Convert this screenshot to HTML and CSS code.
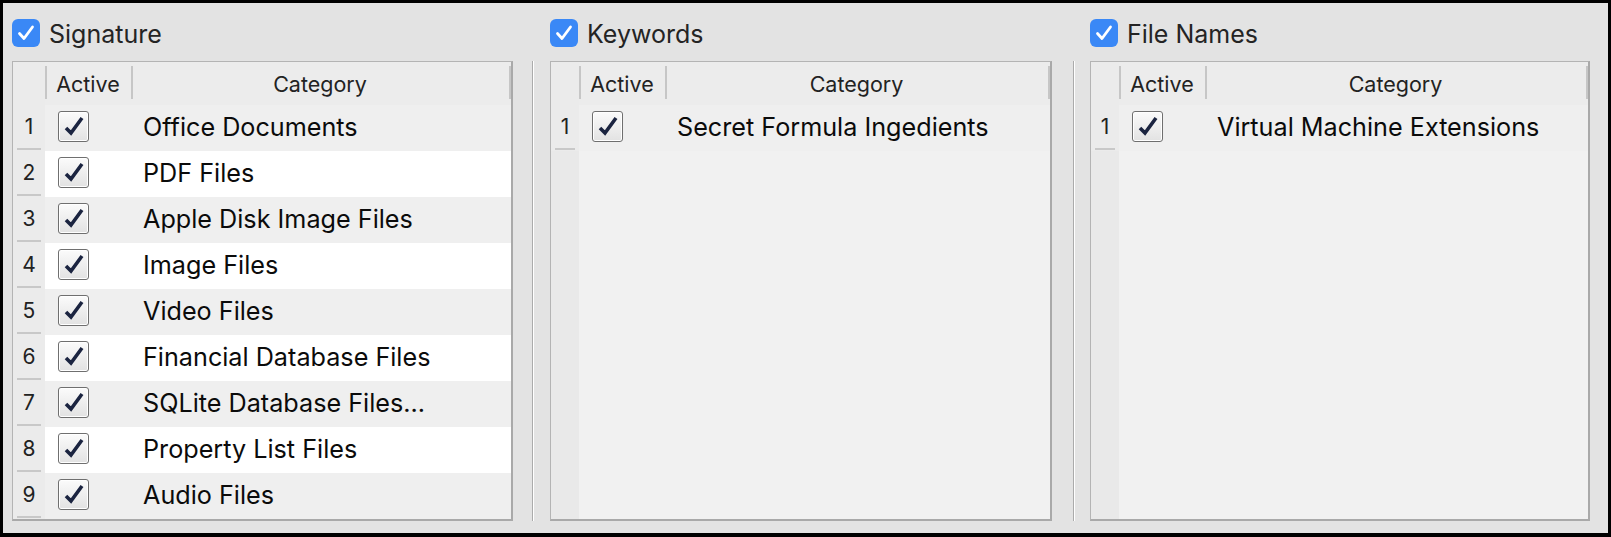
FILE: index.html
```html
<!DOCTYPE html>
<html lang="en">
<head>
<meta charset="utf-8">
<title>Categories</title>
<link rel="stylesheet" href="styles.css">
</head>
<body>
<div class="window">
  <section class="panel p1">
    <div class="title"><span class="bluebox"><svg viewBox="0 0 28 28" width="28" height="28"><path d="M7.5 14.5 L12 19.5 L20.5 8" fill="none" stroke="#fff" stroke-width="2.8" stroke-linecap="round" stroke-linejoin="round"/></svg></span><span class="title-text">Signature</span></div>
    <div class="table">
      <div class="thead">
        <div class="th num"></div>
        <div class="th active">Active</div>
        <div class="th cat">Category</div>
        <div class="th end"></div>
      </div>
      <div class="tbody">
        <div class="tr odd"><div class="num">1</div><div class="cell active"><span class="cb"><svg viewBox="0 0 31 31" width="31" height="31"><path d="M8 17 L13 22 L24 7" fill="none" stroke="#1b2440" stroke-width="3.6"/></svg></span></div><div class="cell cat">Office Documents</div></div>
        <div class="tr even"><div class="num">2</div><div class="cell active"><span class="cb"><svg viewBox="0 0 31 31" width="31" height="31"><path d="M8 17 L13 22 L24 7" fill="none" stroke="#1b2440" stroke-width="3.6"/></svg></span></div><div class="cell cat">PDF Files</div></div>
        <div class="tr odd"><div class="num">3</div><div class="cell active"><span class="cb"><svg viewBox="0 0 31 31" width="31" height="31"><path d="M8 17 L13 22 L24 7" fill="none" stroke="#1b2440" stroke-width="3.6"/></svg></span></div><div class="cell cat">Apple Disk Image Files</div></div>
        <div class="tr even"><div class="num">4</div><div class="cell active"><span class="cb"><svg viewBox="0 0 31 31" width="31" height="31"><path d="M8 17 L13 22 L24 7" fill="none" stroke="#1b2440" stroke-width="3.6"/></svg></span></div><div class="cell cat">Image Files</div></div>
        <div class="tr odd"><div class="num">5</div><div class="cell active"><span class="cb"><svg viewBox="0 0 31 31" width="31" height="31"><path d="M8 17 L13 22 L24 7" fill="none" stroke="#1b2440" stroke-width="3.6"/></svg></span></div><div class="cell cat">Video Files</div></div>
        <div class="tr even"><div class="num">6</div><div class="cell active"><span class="cb"><svg viewBox="0 0 31 31" width="31" height="31"><path d="M8 17 L13 22 L24 7" fill="none" stroke="#1b2440" stroke-width="3.6"/></svg></span></div><div class="cell cat">Financial Database Files</div></div>
        <div class="tr odd"><div class="num">7</div><div class="cell active"><span class="cb"><svg viewBox="0 0 31 31" width="31" height="31"><path d="M8 17 L13 22 L24 7" fill="none" stroke="#1b2440" stroke-width="3.6"/></svg></span></div><div class="cell cat">SQLite Database Files...</div></div>
        <div class="tr even"><div class="num">8</div><div class="cell active"><span class="cb"><svg viewBox="0 0 31 31" width="31" height="31"><path d="M8 17 L13 22 L24 7" fill="none" stroke="#1b2440" stroke-width="3.6"/></svg></span></div><div class="cell cat">Property List Files</div></div>
        <div class="tr odd"><div class="num">9</div><div class="cell active"><span class="cb"><svg viewBox="0 0 31 31" width="31" height="31"><path d="M8 17 L13 22 L24 7" fill="none" stroke="#1b2440" stroke-width="3.6"/></svg></span></div><div class="cell cat">Audio Files</div></div>
      </div>
    </div>
  </section>
  <div class="sep sep1"></div>
  <section class="panel p2">
    <div class="title"><span class="bluebox"><svg viewBox="0 0 28 28" width="28" height="28"><path d="M7.5 14.5 L12 19.5 L20.5 8" fill="none" stroke="#fff" stroke-width="2.8" stroke-linecap="round" stroke-linejoin="round"/></svg></span><span class="title-text">Keywords</span></div>
    <div class="table narrow">
      <div class="thead">
        <div class="th num"></div>
        <div class="th active">Active</div>
        <div class="th cat">Category</div>
        <div class="th end"></div>
      </div>
      <div class="tbody">
        <div class="tr odd"><div class="num">1</div><div class="cell active"><span class="cb"><svg viewBox="0 0 31 31" width="31" height="31"><path d="M8 17 L13 22 L24 7" fill="none" stroke="#1b2440" stroke-width="3.6"/></svg></span></div><div class="cell cat">Secret Formula Ingedients</div></div>
        <div class="filler"><div class="num"></div><div class="rest"></div></div>
      </div>
    </div>
  </section>
  <div class="sep sep2"></div>
  <section class="panel p3">
    <div class="title"><span class="bluebox"><svg viewBox="0 0 28 28" width="28" height="28"><path d="M7.5 14.5 L12 19.5 L20.5 8" fill="none" stroke="#fff" stroke-width="2.8" stroke-linecap="round" stroke-linejoin="round"/></svg></span><span class="title-text">File Names</span></div>
    <div class="table narrow">
      <div class="thead">
        <div class="th num"></div>
        <div class="th active">Active</div>
        <div class="th cat">Category</div>
        <div class="th end"></div>
      </div>
      <div class="tbody">
        <div class="tr odd"><div class="num">1</div><div class="cell active"><span class="cb"><svg viewBox="0 0 31 31" width="31" height="31"><path d="M8 17 L13 22 L24 7" fill="none" stroke="#1b2440" stroke-width="3.6"/></svg></span></div><div class="cell cat">Virtual Machine Extensions</div></div>
        <div class="filler"><div class="num"></div><div class="rest"></div></div>
      </div>
    </div>
  </section>
</div>
</body>
</html>
```

FILE: styles.css
```css
html, body {
  margin: 0;
  padding: 0;
  background: #e3e3e3;
}

body {
  font-family: Inter, "Liberation Sans", sans-serif;
}

.window {
  box-sizing: border-box;
  width: 1611px;
  height: 537px;
  border: 3px solid #000;
  border-bottom-width: 4px;
  background: #e3e3e3;
  padding: 16px 18px 12px 9px;
  display: flex;
  align-items: flex-start;
}

.panel {
  display: flex;
  flex-direction: column;
}

.p1 { width: 501px; }
.p2 { width: 502px; }
.p3 { width: 500px; }

.sep {
  width: 0;
  height: 460px;
  margin-top: 42px;
  border-left: 1px solid #ababab;
  border-right: 1px solid #ffffff;
}

.sep1 { margin-left: 19px; margin-right: 16px; }
.sep2 { margin-left: 21px; margin-right: 15px; }

.title {
  display: flex;
  align-items: center;
  height: 28px;
  margin-bottom: 14px;
}

.bluebox {
  width: 28px;
  height: 28px;
  border-radius: 6px;
  background: #3a88f6;
  display: flex;
}

.title-text {
  margin-left: 9px;
  font-size: 25px;
  color: #242424;
  position: relative;
  top: 1px;
}

.table {
  box-sizing: border-box;
  height: 460px;
  border: 1px solid #b4b4b4;
  border-right: 2px solid #a9a9a9;
  border-bottom: 2px solid #a9a9a9;
  display: flex;
  flex-direction: column;
  background: #f1f1f1;
}

.thead {
  display: flex;
  height: 43px;
  background: #ececec;
  flex: none;
}

.th {
  position: relative;
  display: flex;
  align-items: center;
  justify-content: center;
  font-size: 21.5px;
  color: #222;
}

.th.num { width: 32px; }
.narrow .th.num { width: 28px; }
.th.active { width: 86px; }
.th.cat { flex: 1; }
.th.end {
  width: 2px;
  margin: 4px 0 6px;
  background: #c6c6c6;
}

.th.active::before,
.th.cat::before {
  content: "";
  position: absolute;
  left: 0;
  top: 4px;
  bottom: 6px;
  width: 2px;
  background: #c6c6c6;
}

.tbody {
  flex: 1;
  display: flex;
  flex-direction: column;
}

.tr {
  display: flex;
  height: 46px;
  flex: none;
}

.tr.odd { background: #efefef; }
.tr.even { background: #ffffff; }

.num {
  position: relative;
  width: 32px;
  flex: none;
  background: #ebebeb;
  display: flex;
  align-items: center;
  justify-content: center;
  font-size: 21px;
  color: #222;
  padding-bottom: 3px;
  box-sizing: border-box;
}

.narrow .num { width: 28px; }

.tr .num::after {
  content: "";
  position: absolute;
  left: 4px;
  right: 4px;
  bottom: 1px;
  height: 2px;
  background: #c8c8c8;
}

.cell {
  display: flex;
  align-items: center;
}

.cell.active {
  width: 86px;
  padding-left: 13px;
  box-sizing: border-box;
}

.cb {
  box-sizing: border-box;
  width: 31px;
  height: 31px;
  margin-top: -3px;
  border: 1px solid #6f6f6f;
  border-radius: 3px;
  background: linear-gradient(#fbfbfb, #e2e2e2);
  box-shadow: inset 0 0 0 1px #ffffff;
  display: flex;
  align-items: center;
  justify-content: center;
  overflow: hidden;
}

.cb svg {
  flex: none;
}

.cell.cat {
  flex: 1;
  padding-left: 12px;
  font-size: 25.2px;
  color: #0b0b0b;
  padding-bottom: 2px;
}

.filler {
  flex: 1;
  display: flex;
}

.filler .num {
  background: #e9e9e9;
}

.filler .rest {
  flex: 1;
  background: #f1f1f1;
}
```
